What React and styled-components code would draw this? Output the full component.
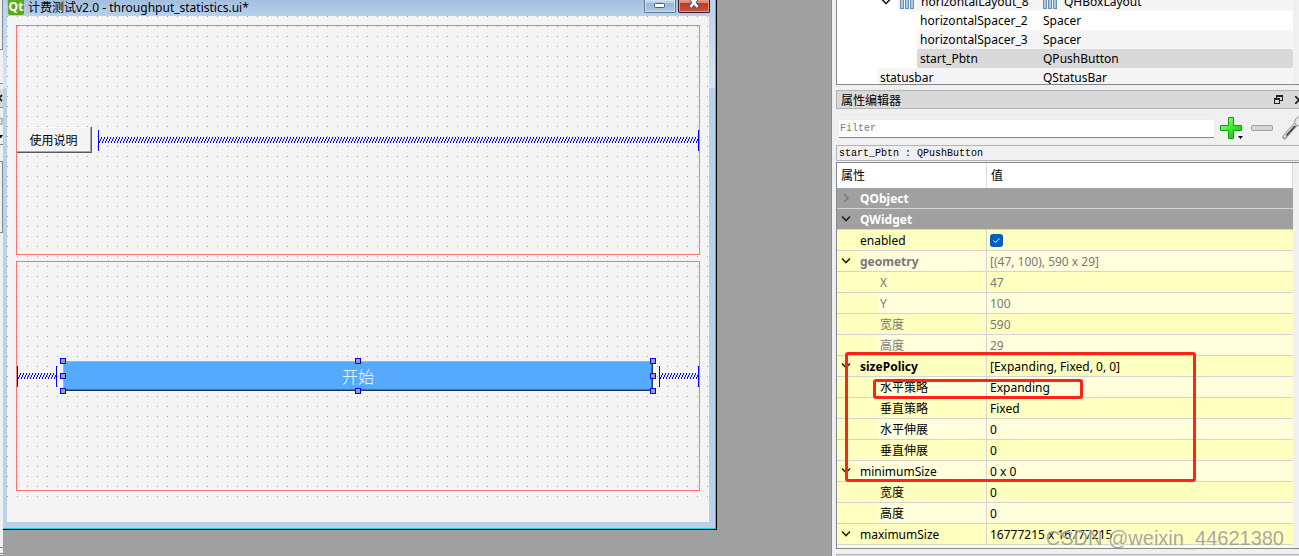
import React from "react";
import styled, { createGlobalStyle, css } from "styled-components";

const Global = createGlobalStyle`
  * { box-sizing: border-box; }
  html, body { margin: 0; height: 100%; overflow: hidden; }
  #root { height: 100%; }
  body { font: 12px/20px "Noto Sans", "Noto Sans CJK SC", sans-serif; color: #000; background: #f0f0f0; }
  svg { flex: none; display: block; }
`;

const Desktop = styled.main`
  display: grid;
  grid-template-columns: 3px minmax(0, 1fr) minmax(0, 467px);
  height: 100vh;
  overflow: hidden;
`;

/* ---------- left dock edge ---------- */
const DockEdge = styled.aside`
  display: flex;
  flex-direction: column;
  background: #f0f0f0;
  overflow: hidden;
`;
const EdgePane = styled.div`
  height: ${(p) => p.$h}px;
  flex: none;
  display: flex;
  align-items: center;
  background: ${(p) => p.$bg || "#f0f0f0"};
  border-bottom: 1px solid #828790;
  border-right: ${(p) => (p.$rule ? "1px solid #828790" : "0")};
  overflow: hidden;
`;
const EdgeGap = styled.div`
  flex: 1;
`;

/* ---------- design window ---------- */
const MdiArea = styled.section`
  display: flex;
  background: #a0a0a0;
  border-right: 1px solid #8a8a92;
  min-width: 0;
`;
const Window = styled.section`
  flex: 1;
  min-width: 0;
  margin: 0 114px 26px 0;
  display: flex;
  flex-direction: column;
  background: linear-gradient(#b9d1ea, #d6e5f4 88px, #b9d1ea 88px);
  border-right: 1px solid #000;
  border-bottom: 1px solid #000;
  box-shadow: inset -1px -1px #2bcbe8;
  padding: 0 7px 7px 4px;
`;
const TitleBar = styled.header`
  display: flex;
  height: 16px;
  flex: none;
  align-items: flex-start;
  gap: 4px;
  margin-right: -1px;
  overflow: hidden;
  background: linear-gradient(#a3bfde, #b9d1ea);
`;
const TitleIcon = styled.span`
  width: 16px;
  height: 15px;
  margin-left: 1px;
  background: #5caa15;
  border-radius: 0 0 2px 2px;
  color: #fff;
  font: bold 12px/14px "Open Sans", sans-serif;
  text-align: center;
`;
const Title = styled.h1`
  margin: 0;
  flex: 1;
  font: 12px/16px "Noto Sans", "Noto Sans CJK SC", sans-serif;
  white-space: nowrap;
`;
const CaptionButton = styled.button`
  width: 32px;
  height: 13px;
  padding: 0;
  display: flex;
  justify-content: center;
  align-items: flex-start;
  border: 1px solid ${(p) => (p.$close ? "#431422" : "#5d7692")};
  border-top: 0;
  border-radius: 0 0 2px 2px;
  margin-left: -2px;
  box-shadow: inset 0 0 0 1px ${(p) => (p.$close ? "#e39a8b" : "#cfe0f1")};
  background: ${(p) =>
    p.$close
      ? "linear-gradient(#d98a7d 0 3px, #b93a23 3px, #c9543f)"
      : "linear-gradient(#bdd2e8 0 3px, #98b5d5 3px, #b0cae6)"};
`;
const Canvas = styled.div`
  flex: 1;
  min-height: 0;
  display: flex;
  flex-direction: column;
  background: #f4f4f4;
  padding-bottom: 24px;
`;
const DotGrid = styled.div`
  flex: 1;
  min-height: 0;
  display: grid;
  grid-template-rows: 1fr 1fr;
  gap: 6px;
  padding: 9px 9px 7px;
  background-image: conic-gradient(from 270deg at 1px 1px, #a0a0a0 90deg, transparent 0);
  background-size: 10px 10px;
`;
const LayoutBox = styled.div`
  display: flex;
  align-items: center;
  gap: 6px;
  border: 1px solid #ff7373;
  min-width: 0;
`;
const SpacerBox = styled.div`
  height: 21px;
  flex: ${(p) => (p.$fixed ? "0 0 40px" : "1")};
  border: solid #0000ff;
  border-width: 0 1px;
  display: flex;
  align-items: center;
`;
const SpringSvg = styled.svg`
  width: 100%;
  height: 6px;
`;
const HelpButton = styled.button`
  width: 75px;
  height: 26px;
  padding: 0 2px 0 0;
  border: 0;
  background: #f4f4f4;
  box-shadow: inset -1px -1px #5a5a5a, inset -2px -2px #a8a8a8, inset 1px 1px #fff;
  font: 12px/22px "Noto Sans CJK SC", sans-serif;
  color: #000;
`;
const Selected = styled.div`
  flex: 1;
  min-width: 0;
  position: relative;
  height: 30px;
`;
const StartButton = styled.button`
  display: block;
  width: 100%;
  height: 30px;
  padding: 0;
  border: 0;
  background: #55aaff;
  color: #fff;
  font: 300 16px/28px "Noto Sans CJK SC", sans-serif;
  box-shadow: inset -1px -1px #1c3a58, inset -2px -2px #3a75b0, inset 1px 1px #7fbfff;
`;
const Handle = styled.i`
  position: absolute;
  width: 6px;
  height: 6px;
  background: #a0a0a0;
  border: 1px solid #0000ff;
  left: ${(p) => p.$x}%;
  top: ${(p) => p.$y}%;
  transform: translate(-50%, -50%);
`;

/* ---------- right docks ---------- */
const Docks = styled.aside`
  display: flex;
  flex-direction: column;
  min-width: 0;
  padding-left: 4px;
  overflow: hidden;
  background: #f0f0f0;
`;
const Tree = styled.div`
  height: 85px;
  flex: none;
  overflow: hidden;
  display: flex;
  flex-direction: column;
  justify-content: flex-end;
  background: #fff;
  border: solid #828790;
  border-width: 0 0 1px 1px;
  padding-right: 6px;
  box-shadow: inset -6px 0 #f0f0f0;
`;
const TreeRow = styled.div`
  display: flex;
  flex: none;
  height: ${(p) => (p.$last ? 16 : 19)}px;
  padding-left: ${(p) => p.$indent}px;
  white-space: nowrap;
  overflow: hidden;
`;
const TreeToggle = styled.button`
  width: 20px;
  height: 19px;
  margin-left: -20px;
  flex: none;
  padding: 0 0 0 4px;
  border: 0;
  background: none;
  display: flex;
  align-items: center;
`;
const TreeFill = styled.div`
  flex: 1;
  display: grid;
  grid-template-columns: minmax(0, 1fr) 250px;
  padding-left: 3px;
  border-radius: 2px;
  background: ${(p) => p.$bg};
`;
const TreeCell = styled.span`
  display: flex;
  align-items: center;
  gap: 6px;
  height: 19px;
`;
const DockTitle = styled.header`
  display: flex;
  align-items: center;
  height: 19px;
  flex: none;
  margin-top: 5px;
  padding-left: 4px;
  border: 1px solid #b4b4b4;
  border-right: 0;
  background: #d9d9d9;
`;
const DockName = styled.h2`
  flex: 1;
  margin: 0;
  font: 12px/18px "Noto Sans CJK SC", sans-serif;
`;
const IconButton = styled.button`
  flex: none;
  padding: 0;
  border: 0;
  background: none;
  display: flex;
  width: ${(p) => p.$w}px;
  justify-content: flex-start;
  overflow: hidden;
`;
const FilterBar = styled.div`
  display: flex;
  align-items: center;
  flex: none;
  height: 36px;
  padding: 2px 0 0 2px;
`;
const FilterInput = styled.input`
  flex: 1;
  min-width: 0;
  height: 19px;
  margin-right: 4px;
  padding: 0 1px;
  border: 1px solid #ececec;
  border-bottom-color: #868686;
  border-radius: 2px;
  font: 10px/16px "Liberation Mono", monospace;
  outline: 0;
  &::placeholder { color: #7a7a7a; opacity: 1; }
`;
const ObjectLabel = styled.div`
  height: 16px;
  flex: none;
  padding-left: 2px;
  border: 1px solid #b4b4b4;
  border-right: 0;
  font: 10px/15px "Liberation Mono", monospace;
  white-space: pre;
`;
const PropertyPane = styled.div`
  position: relative;
  height: 387px;
  flex: none;
  margin-top: 1px;
  padding-right: 6px;
  overflow: hidden;
  border: solid #828790;
  border-width: 1px 0 1px 1px;
  background: #ffffdc content-box;
`;
const Table = styled.table`
  width: 100%;
  border-collapse: separate;
  border-spacing: 0;
  table-layout: fixed;
  background: #fff;
`;
const HeadCell = styled.th`
  height: 25px;
  padding: 0 4px;
  text-align: left;
  vertical-align: top;
  font: 12px/23px "Noto Sans CJK SC", sans-serif;
  border-right: 1px solid #dcdcdc;
`;
const shades = { a: "#ffffbf", b: "#ffffdc", group: "#a0a0a0" };
const cell = css`
  height: 21px;
  padding: 0;
  line-height: 18px;
  text-align: left;
  white-space: nowrap;
  border-bottom: 1px solid #d4d4d4;
  font-weight: 400;
`;
const NameCell = styled.th`
  ${cell}
  border-right: ${(p) => (p.$shade === "group" ? 0 : "1px solid #d4d4d4")};
  background: ${(p) => (p.$shade === "b" ? shades.a : shades[p.$shade])};
`;
const NameFill = styled.div`
  display: flex;
  height: 20px;
  margin-left: ${(p) => (p.$level ? 40 : 20)}px;
  padding: 2px 0 0 3px;
  background: ${(p) => shades[p.$shade]};
  color: ${(p) => p.$color};
  font-weight: ${(p) => (p.$bold ? 700 : 400)};
`;
const Toggle = styled.button`
  width: 20px;
  height: 16px;
  margin-left: -23px;
  margin-right: 3px;
  flex: none;
  padding: 0 0 0 4px;
  border: 0;
  background: none;
  display: flex;
  align-items: center;
`;
const ValueCell = styled.td`
  ${cell}
  padding: 2px 0 0 3px;
  background: ${(p) => shades[p.$shade]};
  color: ${(p) => p.$color};
`;
const Check = styled.input`
  appearance: none;
  display: block;
  width: 13px;
  height: 13px;
  margin: 0 0 2px;
  border-radius: 3px;
  background: #005fb8 url("data:image/svg+xml,%3Csvg xmlns='http://www.w3.org/2000/svg' viewBox='0 0 13 13'%3E%3Cpath d='M3.5 6.5l2 2 4-4' fill='none' stroke='white'/%3E%3C/svg%3E");
`;
const Annotation = styled.div`
  position: absolute;
  left: ${(p) => p.$x}px;
  top: ${(p) => p.$y}px;
  width: ${(p) => p.$w}px;
  height: ${(p) => p.$h}px;
  border: 3px solid #ff2419;
  border-radius: 3px;
  pointer-events: none;
`;
const Watermark = styled.div`
  position: absolute;
  right: 15px;
  bottom: 6px;
  font: 20px/24px "Liberation Sans", sans-serif;
  color: rgba(140, 140, 130, 0.75);
  text-shadow: -1px -1px rgba(255, 255, 255, 0.6);
  white-space: nowrap;
  pointer-events: none;
`;
const NextDock = styled.div`
  flex: none;
  height: 20px;
  margin-top: 5px;
  border: 1px solid #b4b4b4;
  border-right: 0;
  background: #d9d9d9;
`;

function Spring({ id, fixed }) {
  return (
    <SpacerBox $fixed={fixed}>
      <SpringSvg aria-hidden="true" shapeRendering="crispEdges">
        <defs>
          <pattern id={id} width="3" height="6" patternUnits="userSpaceOnUse">
            <path d="M2 0h1v2h-1zM1 2h1v2h-1zM0 4h1v2h-1z" fill="#00f" />
          </pattern>
        </defs>
        <rect width="100%" height="6" fill={`url(#${id})`} />
      </SpringSvg>
    </SpacerBox>
  );
}

const Chevron = ({ closed }) => (
  <svg width="10" height="10" viewBox="0 0 10 10" fill="none" stroke={closed ? "#7c7c7c" : "#222"} strokeWidth="1.6">
    <path d={closed ? "M3 1l4 4-4 4" : "M1 2.5l4 4 4-4"} />
  </svg>
);

const LayoutIcon = () => (
  <svg width="15" height="14" viewBox="0 0 15 14">
    {[0, 5, 10].map((x) => (
      <rect key={x} x={x + 0.5} y="0.5" width="3" height="13" fill="#a9cbe4" stroke="#6b8fae" />
    ))}
  </svg>
);

const handles = [[0, 0], [50, 0], [100, 0], [0, 50], [100, 50], [0, 100], [50, 100], [100, 100]];

const treeRows = [
  { indent: 60, name: "horizontalLayout_8", type: "QHBoxLayout", bg: "#f5f5f5", icon: true },
  { indent: 80, name: "horizontalSpacer_2", type: "Spacer", bg: "#fff" },
  { indent: 80, name: "horizontalSpacer_3", type: "Spacer", bg: "#f5f5f5" },
  { indent: 80, name: "start_Pbtn", type: "QPushButton", bg: "#d9d9d9" },
  { indent: 40, name: "statusbar", type: "QStatusBar", bg: "#f5f5f5", last: true },
];

const GRAY = "#787878";
const rows = [
  { name: "QObject", group: true, closed: true, toggle: true },
  { name: "QWidget", group: true, toggle: true },
  { name: "enabled", check: true },
  { name: "geometry", value: "[(47, 100), 590 x 29]", bold: true, color: GRAY, toggle: true },
  { name: "X", value: "47", level: 1, color: GRAY },
  { name: "Y", value: "100", level: 1, color: GRAY },
  { name: "宽度", value: "590", level: 1, color: GRAY },
  { name: "高度", value: "29", level: 1, color: GRAY },
  { name: "sizePolicy", value: "[Expanding, Fixed, 0, 0]", bold: true, toggle: true },
  { name: "水平策略", value: "Expanding", level: 1 },
  { name: "垂直策略", value: "Fixed", level: 1 },
  { name: "水平伸展", value: "0", level: 1 },
  { name: "垂直伸展", value: "0", level: 1 },
  { name: "minimumSize", value: "0 x 0", toggle: true },
  { name: "宽度", value: "0", level: 1 },
  { name: "高度", value: "0", level: 1 },
  { name: "maximumSize", value: "16777215 x 16777215", toggle: true },
];

function PropertyRow({ row, index }) {
  const shade = row.group ? "group" : index % 2 ? "b" : "a";
  const color = row.group ? "#fff" : row.color || "#000";
  return (
    <tr>
      <NameCell scope="row" $shade={shade} colSpan={row.group ? 2 : 1}>
        <NameFill $shade={shade} $level={row.level} $color={color} $bold={row.bold || row.group}>
          {row.toggle && (
            <Toggle aria-label={`Toggle ${row.name}`}>
              <Chevron closed={row.closed} />
            </Toggle>
          )}
          {row.check ? <label htmlFor="enabled">{row.name}</label> : row.name}
        </NameFill>
      </NameCell>
      {!row.group && (
        <ValueCell $shade={shade} $color={color}>
          {row.check ? <Check id="enabled" type="checkbox" defaultChecked /> : row.value}
        </ValueCell>
      )}
    </tr>
  );
}

export default function App() {
  return (
    <>
      <Global />
      <Desktop>
        <DockEdge>
          <EdgePane $h={50} $rule />
          <EdgePane $h={34} />
          <EdgePane $h={24} $bg="linear-gradient(#f0f0f0 5px, #d9d9d9 5px)">
            <svg width="3" height="20" viewBox="0 0 3 20">
              <path d="M-4 9l6 6M-4 15l6-6" stroke="#222" strokeWidth="1.8" />
            </svg>
          </EdgePane>
          <EdgePane $h={37}>
            <svg width="3" height="30" viewBox="0 0 3 30">
              <path d="M0 7l2 1v5H0" fill="none" stroke="#a8a8a8" strokeWidth="1.5" />
              <path d="M0 24h3l-2 3H0z" fill="#000" />
            </svg>
          </EdgePane>
          <EdgePane $h={17} />
          <EdgePane $h={71} $rule />
          <EdgeGap />
          <EdgePane $h={10} />
          <EdgePane $h={6} />
          <EdgePane $h={2} />
        </DockEdge>

        <MdiArea>
          <Window>
            <TitleBar>
              <TitleIcon>Qt</TitleIcon>
              <Title>计费测试v2.0 - throughput_statistics.ui*</Title>
              <CaptionButton aria-label="Minimize">
                <svg width="12" height="9" viewBox="0 0 12 9">
                  <rect x="0.5" y="3.5" width="10" height="4" rx="1" fill="#fff" stroke="#535666" />
                </svg>
              </CaptionButton>
              <CaptionButton aria-label="Close" $close>
                <svg width="14" height="9" viewBox="0 0 14 9">
                  <path d="M3-3l8 10.5M11-3l-8 10.5" stroke="#535666" strokeWidth="4.6" />
                  <path d="M3.5-2l7 9M10.5-2l-7 9" stroke="#fff" strokeWidth="2.6" />
                </svg>
              </CaptionButton>
            </TitleBar>
            <Canvas>
              <DotGrid>
                <LayoutBox>
                  <HelpButton>使用说明</HelpButton>
                  <Spring id="spring-top" />
                </LayoutBox>
                <LayoutBox>
                  <Spring id="spring-left" fixed />
                  <Selected>
                    <StartButton>开始</StartButton>
                    {handles.map(([x, y]) => (
                      <Handle key={`${x}-${y}`} $x={x} $y={y} />
                    ))}
                  </Selected>
                  <Spring id="spring-right" fixed />
                </LayoutBox>
              </DotGrid>
            </Canvas>
          </Window>
        </MdiArea>

        <Docks>
          <Tree>
            {treeRows.map((r) => (
              <TreeRow key={r.name} $indent={r.indent} $last={r.last}>
                {r.icon && (
                  <TreeToggle aria-label={`Toggle ${r.name}`}>
                    <Chevron />
                  </TreeToggle>
                )}
                <TreeFill $bg={r.bg}>
                  <TreeCell>{r.icon && <LayoutIcon />}{r.name}</TreeCell>
                  <TreeCell>{r.icon && <LayoutIcon />}{r.type}</TreeCell>
                </TreeFill>
              </TreeRow>
            ))}
          </Tree>

          <DockTitle>
            <DockName>属性编辑器</DockName>
            <IconButton aria-label="Float" $w={21}>
              <svg width="9" height="9" viewBox="0 0 9 9" fill="none" stroke="#222" shapeRendering="crispEdges">
                <path d="M2.5 3V.5h6v5H6M2 1.5h7M.5 3.5h5v5h-5zM0 4.5h6" />
              </svg>
            </IconButton>
            <IconButton aria-label="Close panel" $w={4}>
              <svg width="8" height="8" viewBox="0 0 8 8" stroke="#222" strokeWidth="1.8">
                <path d="M0 0l8 8M8 0l-8 8" />
              </svg>
            </IconButton>
          </DockTitle>

          <FilterBar>
            <FilterInput placeholder="Filter" aria-label="Filter" />
            <IconButton aria-label="Add property" $w={32}>
              <svg width="25" height="24" viewBox="0 0 25 24">
                <defs>
                  <linearGradient id="plus" x1="0" y1="0" x2="1" y2="1">
                    <stop offset="0" stopColor="#b9ffb0" />
                    <stop offset="0.5" stopColor="#3fe52f" />
                    <stop offset="1" stopColor="#00c400" />
                  </linearGradient>
                </defs>
                <path d="M9.5 1.5h5v8h8v5h-8v8h-5v-8h-8v-5h8z" fill="url(#plus)" stroke="#12a012" />
                <path d="M19 20h5l-2.5 3z" fill="#000" />
              </svg>
            </IconButton>
            <IconButton aria-label="Remove property" $w={30}>
              <svg width="22" height="6" viewBox="0 0 22 6">
                <rect x="0.5" y="0.5" width="21" height="5" rx="1" fill="#d4d4d4" stroke="#a0a0a0" />
              </svg>
            </IconButton>
            <IconButton aria-label="Configure" $w={18}>
              <svg width="24" height="24" viewBox="0 0 24 24">
                <path d="M3.5 21L15 8" stroke="#9a9a9a" strokeWidth="4.5" strokeLinecap="round" />
                <path d="M3.5 20.5L15 7.5" stroke="#d8d8d8" strokeWidth="2.5" strokeLinecap="round" />
                <path d="M5.5 19.5L14 10" stroke="#444" strokeWidth="1.8" />
                <path d="M14 8c-1-4 1-7 5-7.5v5l5 1c-2 4-6 5-10 1.500z" fill="#e4e4e4" stroke="#999" />
              </svg>
            </IconButton>
          </FilterBar>

          <ObjectLabel>start_Pbtn : QPushButton</ObjectLabel>

          <PropertyPane>
            <Table>
              <colgroup>
                <col width="150" />
                <col />
              </colgroup>
              <thead>
                <tr>
                  <HeadCell scope="col">属性</HeadCell>
                  <HeadCell scope="col">值</HeadCell>
                </tr>
              </thead>
              <tbody>
                {rows.map((row, i) => (
                  <PropertyRow key={i} row={row} index={i} />
                ))}
              </tbody>
            </Table>
            <Annotation $x={8} $y={189} $w={351} $h={130} />
            <Annotation $x={36} $y={216} $w={210} $h={20} />
          </PropertyPane>
          <NextDock />
        </Docks>
      </Desktop>
      <Watermark>CSDN @weixin_44621380</Watermark>
    </>
  );
}
